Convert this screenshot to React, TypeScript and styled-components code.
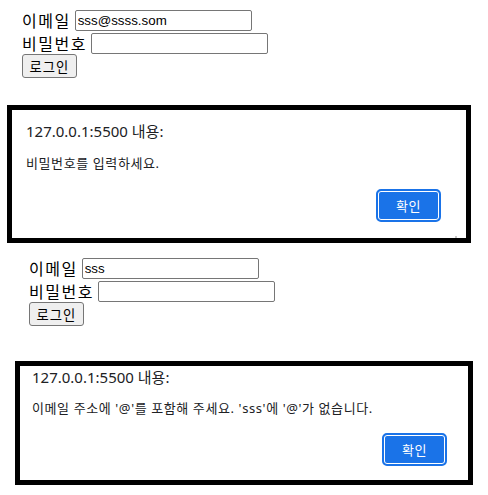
import React from "react";
import styled, { createGlobalStyle } from "styled-components";

const GlobalStyle = createGlobalStyle`
  html, body {
    margin: 0;
    padding: 0;
    background: #ffffff;
  }
  body {
    font-family: "Noto Sans", "Noto Sans CJK KR", sans-serif;
  }
`;

const Page = styled.div`
  display: flex;
  flex-direction: column;
  width: 488px;
  height: 495px;
  overflow: hidden;
`;

const Form = styled.form<{ $left: number; $top: number }>`
  display: flex;
  flex-direction: column;
  align-items: flex-start;
  gap: 2px;
  margin: ${(p) => p.$top}px 0 0 ${(p) => p.$left}px;
`;

const Row = styled.div`
  display: flex;
  align-items: center;
  height: 21px;
  &:nth-of-type(2) {
    margin-bottom: -2px;
  }
`;

const Label = styled.label`
  font-family: "Noto Sans CJK KR", sans-serif;
  font-size: 16px;
  letter-spacing: 1.5px;
  color: #000;
  line-height: 21px;
  margin-right: 4px;
`;

const Input = styled.input`
  box-sizing: border-box;
  width: 177px;
  height: 21px;
  padding: 1px 2px;
  border: 1px solid #767676;
  border-radius: 2px;
  font-family: "Liberation Sans", Arial, sans-serif;
  font-size: 13.33px;
  color: #000;
  background: #fff;
  outline: none;
`;

const SubmitButton = styled.button`
  box-sizing: border-box;
  width: 55px;
  height: 24px;
  padding: 0;
  border: 1px solid #767676;
  border-radius: 3px;
  background: #efefef;
  font-family: "Noto Sans CJK KR", sans-serif;
  font-size: 13.33px;
  letter-spacing: 1px;
  color: #000;
`;

const Dialog = styled.div<{
  $left: number;
  $top: number;
  $width: number;
  $height: number;
  $pad: string;
}>`
  position: relative;
  box-sizing: border-box;
  display: flex;
  flex-direction: column;
  width: ${(p) => p.$width}px;
  height: ${(p) => p.$height}px;
  margin: ${(p) => p.$top}px 0 0 ${(p) => p.$left}px;
  padding: ${(p) => p.$pad};
  border: 5px solid #000;
  background: #fff;
  color: #202124;
`;

const Grip = styled.span`
  position: absolute;
  right: 9px;
  bottom: 0px;
  width: 2px;
  height: 2px;
  background: #c8c8c8;
`;

const Title = styled.div<{ $gap: number }>`
  font-size: 15px;
  line-height: 20px;
  margin-bottom: ${(p) => p.$gap}px;
`;

const Message = styled.div`
  font-size: 13px;
  line-height: 18px;
  letter-spacing: 0.6px;
`;

const Actions = styled.div`
  display: flex;
  justify-content: flex-end;
  margin-top: auto;
`;

const OkButton = styled.button`
  box-sizing: border-box;
  width: 65px;
  height: 33px;
  border: 2px solid #1a73e8;
  border-radius: 5px;
  box-shadow: inset 0 0 0 1px #ffffff;
  background: #1a73e8;
  color: #ffffff;
  font-family: "Noto Sans CJK KR", sans-serif;
  font-size: 13px;
  letter-spacing: 0.5px;
  padding: 0;
`;

const LoginForm: React.FC<{ left: number; top: number; email: string }> = ({
  left,
  top,
  email,
}) => (
  <Form $left={left} $top={top} onSubmit={(e) => e.preventDefault()}>
    <Row>
      <Label>이메일</Label>
      <Input type="text" defaultValue={email} />
    </Row>
    <Row>
      <Label>비밀번호</Label>
      <Input type="password" />
    </Row>
    <SubmitButton type="submit">로그인</SubmitButton>
  </Form>
);

export default function App() {
  return (
    <Page>
      <GlobalStyle />
      <LoginForm left={22} top={10} email="sss@ssss.som" />

      <Dialog $left={7} $top={27} $width={464} $height={138} $pad="11px 25px 16px 14px">
        <Title $gap={13}>127.0.0.1:5500 내용:</Title>
        <Message>비밀번호를 입력하세요.</Message>
        <Actions>
          <OkButton>확인</OkButton>
        </Actions>
        <Grip />
      </Dialog>

      <LoginForm left={29} top={15} email="sss" />

      <Dialog $left={15} $top={35} $width={458} $height={124} $pad="1px 21px 14px 12px">
        <Title $gap={12}>127.0.0.1:5500 내용:</Title>
        <Message>이메일 주소에 '@'를 포함해 주세요. 'sss'에 '@'가 없습니다.</Message>
        <Actions>
          <OkButton>확인</OkButton>
        </Actions>
      </Dialog>
    </Page>
  );
}
